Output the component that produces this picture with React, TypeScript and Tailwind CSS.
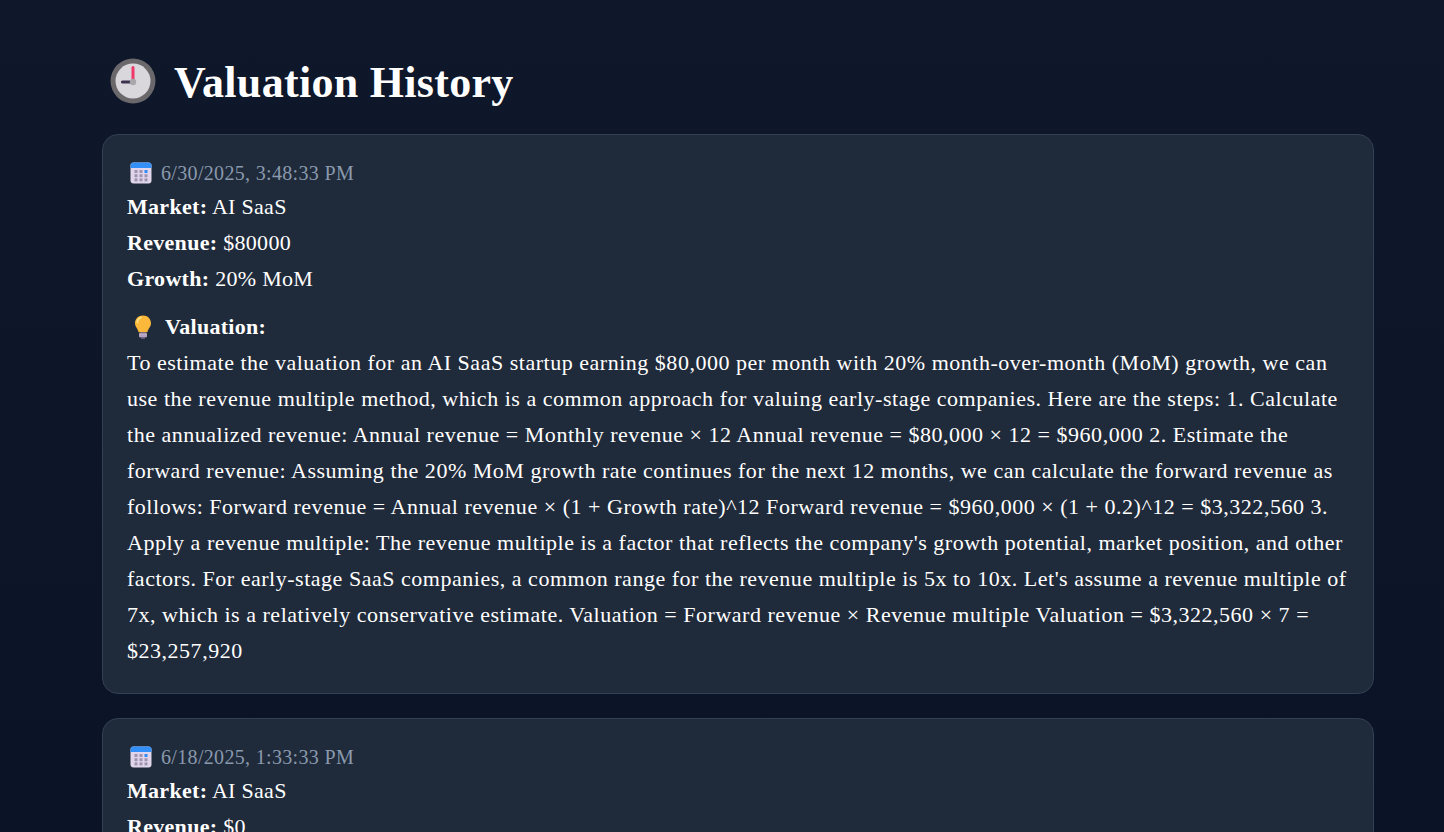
const entries = [
  {
    date: '6/30/2025, 3:48:33 PM',
    market: 'AI SaaS',
    revenue: '$80000',
    growth: '20% MoM',
    valuation:
      "To estimate the valuation for an AI SaaS startup earning $80,000 per month with 20% month-over-month (MoM) growth, we can use the revenue multiple method, which is a common approach for valuing early-stage companies. Here are the steps: 1. Calculate the annualized revenue: Annual revenue = Monthly revenue × 12 Annual revenue = $80,000 × 12 = $960,000 2. Estimate the forward revenue: Assuming the 20% MoM growth rate continues for the next 12 months, we can calculate the forward revenue as follows: Forward revenue = Annual revenue × (1 + Growth rate)^12 Forward revenue = $960,000 × (1 + 0.2)^12 = $3,322,560 3. Apply a revenue multiple: The revenue multiple is a factor that reflects the company's growth potential, market position, and other factors. For early-stage SaaS companies, a common range for the revenue multiple is 5x to 10x. Let's assume a revenue multiple of 7x, which is a relatively conservative estimate. Valuation = Forward revenue × Revenue multiple Valuation = $3,322,560 × 7 = $23,257,920",
  },
  {
    date: '6/18/2025, 1:33:33 PM',
    market: 'AI SaaS',
    revenue: '$0',
    growth: '0% MoM',
    valuation: 'To estimate the valuation for an AI SaaS startup with no revenue yet, we can use the cost to build method.',
  },
];

const ClockIcon = () => (
  <svg viewBox="0 0 46 46" className="mb-[4px] h-[46px] w-[46px] shrink-0">
    <circle cx="23" cy="23" r="22.5" fill="#6b686c" />
    <circle cx="23" cy="23" r="17.5" fill="#dad7dc" />
    <path d="M23 9.5v13" stroke="#f0386b" strokeWidth="3" strokeLinecap="round" />
    <path d="M12.5 24h10" stroke="#3d3150" strokeWidth="3.2" strokeLinecap="round" />
    <circle cx="23" cy="24" r="3.2" fill="#a9a6ac" />
  </svg>
);

const CalendarIcon = () => (
  <svg viewBox="0 0 22 22" className="h-[22px] w-[22px] shrink-0">
    <rect x="0.5" y="0.5" width="21" height="21" rx="3" fill="#e0d5ea" />
    <path d="M0.5 6V3.5a3 3 0 0 1 3-3h15a3 3 0 0 1 3 3V6z" fill="#3390f8" />
    <g fill="#9e94b0">
      <rect x="4.5" y="8" width="3" height="3" />
      <rect x="9.5" y="8" width="3" height="3" />
      <rect x="14.5" y="8" width="3" height="3" fill="#2f8cf5" />
      <rect x="4.5" y="12.2" width="3" height="3" />
      <rect x="9.5" y="12.2" width="3" height="3" />
      <rect x="14.5" y="12.2" width="3" height="3" />
      <rect x="4.5" y="16.4" width="3" height="3" />
      <rect x="9.5" y="16.4" width="3" height="3" />
      <rect x="14.5" y="16.4" width="3" height="3" />
    </g>
  </svg>
);

const BulbIcon = () => (
  <svg viewBox="0 0 18 24" className="h-[24px] w-[18px] shrink-0">
    <path d="M9 0.5C4.2 0.5 1 4 1 8.2c0 3.6 3 5.6 3.6 9h8.8c.6-3.4 3.6-5.4 3.6-9C17 4 13.8 .5 9 .5z" fill="#fcb83a" />
    <path d="M7 2.5C5 3.2 3.4 5 3.4 7.5" stroke="#ffe48a" strokeWidth="1.6" fill="none" strokeLinecap="round" />
    <rect x="5" y="17.5" width="8" height="5" rx="1.5" fill="#a08bb0" />
    <path d="M5 19.2h8M5 21h8" stroke="#dcd0e4" strokeWidth="0.7" />
    <rect x="7" y="22.3" width="4" height="1.4" rx="0.7" fill="#7d6a8e" />
  </svg>
);

export default function App() {
  return (
    <div className="h-[832px] overflow-hidden bg-gradient-to-b from-[#0f172a] to-[#0b1327] px-[102px] pr-[70px] pt-[48px] font-['Liberation_Serif',serif] text-[22px] leading-[36px] text-white">
      <h1 className="mb-[16px] flex h-[70px] items-center gap-[18px] pl-[8px] text-[44px] leading-[70px] font-bold tracking-[0.3px]">
        <ClockIcon />
        <span>Valuation History</span>
      </h1>
      <div className="flex flex-col gap-[24px]">
        {entries.map((entry) => (
          <div key={entry.date} className="rounded-[16px] border border-[#334155] bg-[#1f2a3a] px-[24px] pt-[21px] pb-[24px]">
            <div className="flex h-[33px] items-center gap-[9px] pl-[3px] text-[20px] leading-[33px] tracking-[0.33px] text-[#8a99ad]">
              <CalendarIcon />
              <span className="pt-[2px]">{entry.date}</span>
            </div>
            <div className="tracking-[0.3px]"><b>Market:</b> {entry.market}</div>
            <div className="tracking-[0.3px]"><b>Revenue:</b> {entry.revenue}</div>
            <div className="tracking-[0.3px]"><b>Growth:</b> {entry.growth}</div>
            <div className="mt-[12px] flex items-center gap-[13px] pl-[7px] tracking-[0.3px]">
              <BulbIcon />
              <b>Valuation:</b>
            </div>
            <p className="tracking-[0.52px]">{entry.valuation}</p>
          </div>
        ))}
      </div>
    </div>
  );
}
